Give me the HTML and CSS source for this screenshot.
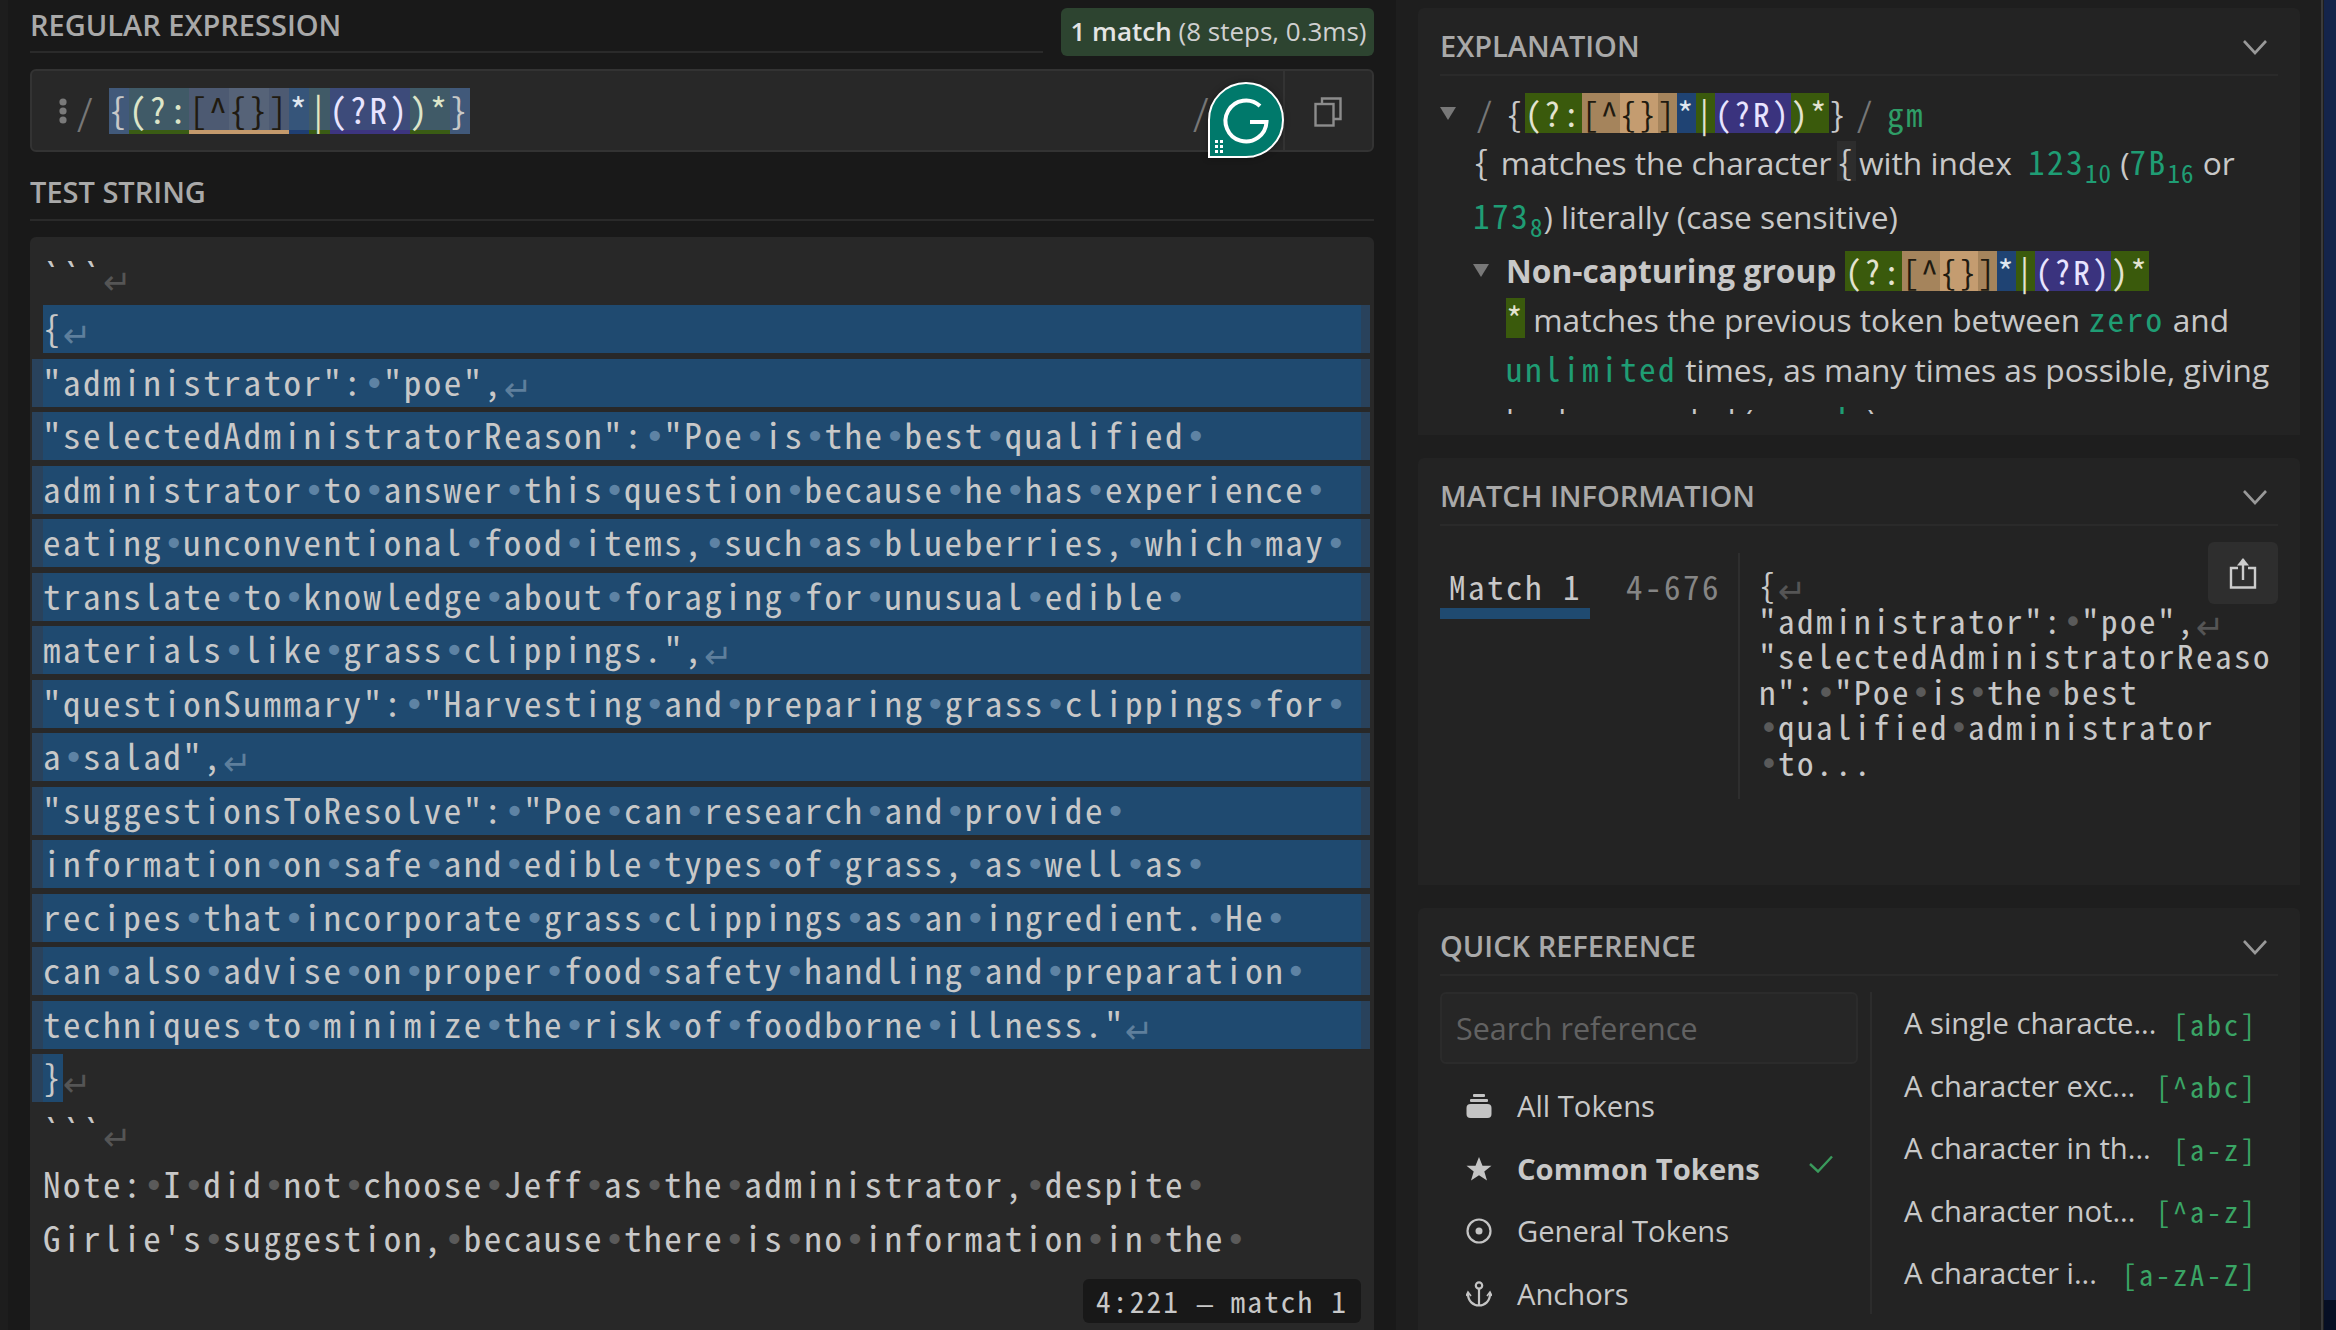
FILE: index.html
```html
<!doctype html>
<html lang="en">
<head>
	<meta charset="UTF-8" />
	<title>regex tester</title>
	<link rel="stylesheet" href="styles.css">
</head>
<body>

<div class="rail"></div>

<div class="main">
	<div class="head-row">
		<div class="head grow">REGULAR EXPRESSION</div>
		<div class="badge"><b>1 match</b> (8 steps, 0.3ms)</div>
	</div>

	<div class="rx-box">
		<svg class="kebab" width="8" height="26" viewBox="0 0 8 26"><circle cx="4" cy="4" r="3.6"/><circle cx="4" cy="13" r="3.6"/><circle cx="4" cy="22" r="3.6"/></svg>
		<span class="rx-slash mono">/</span>
		<div class="rx mono">
			<span class="r-brace">{</span><span class="r-grp">(?:</span><span class="r-set">[^</span><span class="r-set2">{}</span><span class="r-set">]</span><span class="r-star">*</span><span class="r-grp r-bar">|</span><span class="r-rec">(?R)</span><span class="r-grp">)*</span><span class="r-brace">}</span>
		</div>
		<span class="rx-slash rx-end mono">/</span>
		<div class="rx-copy">
			<svg width="28" height="30" viewBox="0 0 28 30" fill="none" stroke="#8c8c8c" stroke-width="2.4"><path d="M8 6V1.5H26.5V22H20"/><rect x="1.5" y="7" width="18" height="21.5"/></svg>
		</div>
		<div class="grammarly">
			<svg width="72" height="72" viewBox="0 0 72 72"><path d="M50 22A20.5 20.5 0 1 0 56.500 38H40" fill="none" stroke="#fff" stroke-width="4"/><g fill="#fff"><rect x="5" y="56" width="3" height="3"/><rect x="10" y="56" width="3" height="3"/><rect x="5" y="61" width="3" height="3"/><rect x="10" y="61" width="3" height="3"/><rect x="5" y="66" width="3" height="3"/><rect x="10" y="66" width="3" height="3"/></g></svg>
		</div>
	</div>

	<div class="head test-head">TEST STRING</div>

	<div class="editor mono">
		<div class="ln">```<u>↵</u></div>
		<div class="ln hl first">{<u>↵</u></div>
		<div class="ln hl">"administrator":<i>•</i>"poe",<u>↵</u></div>
		<div class="ln hl">"selectedAdministratorReason":<i>•</i>"Poe<i>•</i>is<i>•</i>the<i>•</i>best<i>•</i>qualified<i>•</i></div>
		<div class="ln hl">administrator<i>•</i>to<i>•</i>answer<i>•</i>this<i>•</i>question<i>•</i>because<i>•</i>he<i>•</i>has<i>•</i>experience<i>•</i></div>
		<div class="ln hl">eating<i>•</i>unconventional<i>•</i>food<i>•</i>items,<i>•</i>such<i>•</i>as<i>•</i>blueberries,<i>•</i>which<i>•</i>may<i>•</i></div>
		<div class="ln hl">translate<i>•</i>to<i>•</i>knowledge<i>•</i>about<i>•</i>foraging<i>•</i>for<i>•</i>unusual<i>•</i>edible<i>•</i></div>
		<div class="ln hl">materials<i>•</i>like<i>•</i>grass<i>•</i>clippings.",<u>↵</u></div>
		<div class="ln hl">"questionSummary":<i>•</i>"Harvesting<i>•</i>and<i>•</i>preparing<i>•</i>grass<i>•</i>clippings<i>•</i>for<i>•</i></div>
		<div class="ln hl">a<i>•</i>salad",<u>↵</u></div>
		<div class="ln hl">"suggestionsToResolve":<i>•</i>"Poe<i>•</i>can<i>•</i>research<i>•</i>and<i>•</i>provide<i>•</i></div>
		<div class="ln hl">information<i>•</i>on<i>•</i>safe<i>•</i>and<i>•</i>edible<i>•</i>types<i>•</i>of<i>•</i>grass,<i>•</i>as<i>•</i>well<i>•</i>as<i>•</i></div>
		<div class="ln hl">recipes<i>•</i>that<i>•</i>incorporate<i>•</i>grass<i>•</i>clippings<i>•</i>as<i>•</i>an<i>•</i>ingredient.<i>•</i>He<i>•</i></div>
		<div class="ln hl">can<i>•</i>also<i>•</i>advise<i>•</i>on<i>•</i>proper<i>•</i>food<i>•</i>safety<i>•</i>handling<i>•</i>and<i>•</i>preparation<i>•</i></div>
		<div class="ln hl">techniques<i>•</i>to<i>•</i>minimize<i>•</i>the<i>•</i>risk<i>•</i>of<i>•</i>foodborne<i>•</i>illness."<u>↵</u></div>
		<div class="ln last"><span class="hl-end">}</span><u>↵</u></div>
		<div class="ln">```<u>↵</u></div>
		<div class="ln">Note:<i>•</i>I<i>•</i>did<i>•</i>not<i>•</i>choose<i>•</i>Jeff<i>•</i>as<i>•</i>the<i>•</i>administrator,<i>•</i>despite<i>•</i></div>
		<div class="ln">Girlie's<i>•</i>suggestion,<i>•</i>because<i>•</i>there<i>•</i>is<i>•</i>no<i>•</i>information<i>•</i>in<i>•</i>the<i>•</i></div>
		<div class="pos">4:221 <span class="dash">—</span> match 1</div>
	</div>
</div>

<div class="side">
	<div class="panel">
		<div class="head panel-head">EXPLANATION
			<svg class="chev" width="26" height="16" viewBox="0 0 26 16"><path d="M2 2L13 14L24 2" fill="none" stroke="#999" stroke-width="2.6"/></svg>
		</div>
		<div class="ex-body">
			<div class="ex-top">
				<span class="tri"></span>
				<span class="ex-slash mono">/</span>
				<span class="toks mono">{<span class="t-grp">(?:</span><span class="t-set">[^</span><span class="t-set2">{}</span><span class="t-set">]</span><span class="t-star">*</span><span class="t-grp">|</span><span class="t-rec">(?R)</span><span class="t-grp">)*</span>}</span>
				<span class="ex-slash ex-slash2 mono">/</span>
				<span class="flags mono">gm</span>
			</div>
			<div class="ex-text">
				<span class="mono pl">{</span> matches the character <span class="mono chip">{</span> with index <span class="num num-gap mono">123<sub>10</sub></span> (<span class="num mono">7B<sub>16</sub></span> or<br>
				<span class="num mono">173<sub>8</sub></span>) literally (case sensitive)
			</div>
			<div class="ex-group">
				<span class="tri"></span>
				<b>Non-capturing group</b>
				<span class="toks mono"><span class="t-grp">(?:</span><span class="t-set">[^</span><span class="t-set2">{}</span><span class="t-set">]</span><span class="t-star">*</span><span class="t-grp">|</span><span class="t-rec">(?R)</span><span class="t-grp">)*</span></span>
			</div>
			<div class="ex-text ex-sub">
				<span class="mono t-grp">*</span> matches the previous token between <span class="num mono">zero</span> and<br>
				<span class="num mono">unlimited</span> times, as many times as possible, giving<br>
				back as needed (<span class="num mono">greedy</span>)
			</div>
		</div>
	</div>

	<div class="panel">
		<div class="head panel-head">MATCH INFORMATION
			<svg class="chev" width="26" height="16" viewBox="0 0 26 16"><path d="M2 2L13 14L24 2" fill="none" stroke="#999" stroke-width="2.6"/></svg>
		</div>
		<div class="mi-body mono">
			<div class="mi-name"><span class="mi-tab">Match 1</span></div>
			<div class="mi-range">4-676</div>
			<div class="mi-text">
				<div>{<u>↵</u></div>
				<div>"administrator":<i>•</i>"poe",<u>↵</u></div>
				<div>"selectedAdministratorReaso</div>
				<div>n":<i>•</i>"Poe<i>•</i>is<i>•</i>the<i>•</i>best</div>
				<div><i>•</i>qualified<i>•</i>administrator</div>
				<div><i>•</i>to...</div>
			</div>
			<div class="mi-share">
				<svg width="28" height="32" viewBox="0 0 28 32" fill="none" stroke="#ccc" stroke-width="2.4"><path d="M9 11H2V30.500H26V11H19"/><path d="M14 23V2.500"/><path d="M14 1L8 8.500H20Z" fill="#ccc" stroke="none"/></svg>
			</div>
		</div>
	</div>

	<div class="panel panel-last">
		<div class="head panel-head">QUICK REFERENCE
			<svg class="chev" width="26" height="16" viewBox="0 0 26 16"><path d="M2 2L13 14L24 2" fill="none" stroke="#999" stroke-width="2.6"/></svg>
		</div>
		<div class="qr-body">
			<div class="qr-left">
				<div class="search">Search reference</div>
				<div class="menu">
					<svg width="26" height="24" viewBox="0 0 26 24" fill="#c4c4c4"><rect x="7" y="0" width="12" height="3" rx="1"/><rect x="4" y="5" width="18" height="3" rx="1"/><rect x="0.500" y="10" width="25" height="14" rx="4"/></svg>
					All Tokens
				</div>
				<div class="menu menu-on">
					<svg width="26" height="24" viewBox="0 0 26 24" fill="#c4c4c4"><path d="M13 0L16.500 8.800H25.500L18.300 14.500L21 23.500L13 18.200L5 23.500L7.700 14.500L.5 8.800H9.500Z"/></svg>
					Common Tokens
					<svg class="check" width="28" height="18" viewBox="0 0 28 18"><path d="M3 9L11 16.500L25 1.500" fill="none" stroke="#3a9a5c" stroke-width="2.400"/></svg>
				</div>
				<div class="menu">
					<svg width="26" height="26" viewBox="0 0 26 26" fill="none" stroke="#c4c4c4" stroke-width="2.200"><circle cx="13" cy="13" r="11.500"/><circle cx="13" cy="13" r="3.500" fill="#c4c4c4" stroke="none"/></svg>
					General Tokens
				</div>
				<div class="menu">
					<svg width="26" height="26" viewBox="0 0 26 26" fill="none" stroke="#c4c4c4" stroke-width="2.200"><circle cx="13" cy="4.500" r="3.200"/><path d="M13 8V24.500"/><path d="M2 13C2 20 7 24.500 13 24.500S24 20 24 13"/><path d="M0 15L2 11L5 15M21 15L24 11L26 15" stroke-width="1.600"/></svg>
					Anchors
				</div>
			</div>
			<div class="qr-right">
				<div class="qr-row"><span>A single characte...</span><span class="qr-tok mono">[abc]</span></div>
				<div class="qr-row"><span>A character exc...</span><span class="qr-tok mono">[^abc]</span></div>
				<div class="qr-row"><span>A character in th...</span><span class="qr-tok mono">[a-z]</span></div>
				<div class="qr-row"><span>A character not...</span><span class="qr-tok mono">[^a-z]</span></div>
				<div class="qr-row"><span>A character i...</span><span class="qr-tok mono">[a-zA-Z]</span></div>
			</div>
		</div>
	</div>
</div>

<div class="strip"><div class="strip-top"></div></div>

</body>
</html>
```

FILE: styles.css
```css
html, body{
	margin: 0;
	padding: 0;
	height: 1330px;
	overflow: hidden;
}
body{
	display: flex;
	background: #1e1e1e;
	color: #c8c8c8;
	font-family: "Open Sans", "Noto Sans", sans-serif;
	font-size: 29.200px;
}
.mono{
	font-family: "Noto Sans Mono CJK SC", "Source Code Pro", "DejaVu Sans Mono", monospace;
}
.rail{
	width: 8px;
	flex: none;
	background: #1d1d1d;
}
.main{
	width: 1344px;
	flex: none;
	padding: 0 22px;
	background: #191919;
	display: flex;
	flex-direction: column;
}

/* section headings */
.head{
	font-size: 29px;
	font-weight: 600;
	color: #a9a9a9;
	border-bottom: 2px solid #2a2a2a;
	box-sizing: border-box;
}
.head-row{
	display: flex;
	gap: 18px;
	height: 69px;
	flex: none;
}
.head.grow{
	flex: 1;
	height: 53px;
	line-height: 50px;
}
.badge{
	width: 313px;
	height: 48px;
	margin-top: 8px;
	box-sizing: border-box;
	padding-left: 2px;
	background: #2d4430;
	border-radius: 6px;
	line-height: 47px;
	text-align: center;
	font-size: 26px;
	color: #d0d0d0;
	white-space: nowrap;
}
.badge b{
	font-weight: 600;
	color: #e4e4e4;
}

/* regex box */
.rx-box{
	position: relative;
	height: 83px;
	flex: none;
	box-sizing: border-box;
	background: #282828;
	border: 2px solid #333;
	border-radius: 6px;
	display: flex;
	align-items: center;
}
.kebab{
	margin-left: 27px;
	fill: #7a7a7a;
	flex: none;
}
.rx-slash{
	color: #777;
	font-size: 35px;
	letter-spacing: 2.540px;
	width: 20px;
	margin-left: 9px;
	flex: none;
}
.rx{
	display: flex;
	margin-left: 13px;
	font-size: 35px;
	letter-spacing: 2.540px;
	height: 46px;
	line-height: 42px;
}
.rx span{
	height: 42px;
	border-bottom: 4px solid transparent;
}
.r-brace{ background: #41597a; color: #c8c8c8; }
.rx .r-grp{ background: #405a67; color: #dde5c8; border-bottom-color: #3a5c14; }
.rx .r-set{ background: #4d5a72; color: #201a10; border-bottom-color: #c49a6c; }
.rx .r-set2{ background: #566378; color: #201a10; border-bottom-color: #c49a6c; }
.rx .r-star{ background: #36557a; color: #e0e8f0; border-bottom-color: #1f3f73; }
.rx .r-rec{ background: #3d4b7a; color: #e8e4ff; border-bottom-color: #3d3580; }
.rx .r-bar{ color: #e6e8c0; }
.rx-end{
	margin-left: auto;
	margin-right: 71px;
}
.rx-copy{
	width: 89px;
	align-self: stretch;
	border-left: 2px solid #333;
	display: flex;
	align-items: center;
	justify-content: center;
	flex: none;
	padding: 2px 2px 0 0;
	box-sizing: border-box;
}
.grammarly{
	position: absolute;
	left: 1176px;
	top: 11px;
	width: 72px;
	height: 72px;
	border: 2px solid #fff;
	border-radius: 50% 50% 50% 0;
	background: #00796b;
	box-shadow: 0 0 6px rgba(0, 0, 0, 0.35);
}
.grammarly svg{
	display: block;
}

.test-head{
	height: 69px;
	line-height: 63px;
	flex: none;
	padding-top: 8px;
	margin-bottom: 16px;
}

/* test string */
.editor{
	position: relative;
	flex: 1;
	background: #282828;
	border-radius: 6px 6px 0 0;
	padding-top: 14.500px;
	font-size: 35px;
	letter-spacing: 2.540px;
	color: #c8c8c8;
	overflow: hidden;
}
.ln{
	height: 48px;
	line-height: 44px;
	margin: 0 4px 5.500px 2px;
	border-left: 11px solid transparent;
	border-right: 9px solid transparent;
	white-space: pre;
}
.ln.hl{
	background: #1f4a70;
	background-clip: padding-box;
	border-left-color: #29425c;
	border-right-color: #29425c;
}
.ln.first{
	border-left-color: transparent;
}
.hl-end{
	display: inline-block;
	background: #1f4a70;
	height: 48px;
	box-shadow: -11px 0 0 #29425c;
}
i{
	display: inline-block;
	width: 20px;
	text-align: center;
	font-style: normal;
	font-family: "DejaVu Sans Mono", monospace;
	letter-spacing: 0;
	color: #5a5a5a;
}
u{
	text-decoration: none;
	display: inline-block;
	width: 20px;
	letter-spacing: 0;
	color: #555;
	font-family: "DejaVu Sans", sans-serif;
	font-size: 34px;
	line-height: 20px;
	position: relative;
	top: 5px;
}
.hl i{
	color: #5e83a4;
}
.hl u{
	color: #5e7f9c;
}
.pos{
	position: absolute;
	right: 13px;
	bottom: 7px;
	height: 44px;
	line-height: 43px;
	padding: 0 13px;
	background: #181818;
	border-radius: 6px;
	font-size: 29.400px;
	letter-spacing: 2.100px;
	color: #c8c8c8;
}
.dash{
	display: inline-block;
	width: 16.800px;
	font-family: "DejaVu Sans Mono", monospace;
	font-size: 27px;
	letter-spacing: 0;
}

/* right column */
.side{
	width: 925px;
	flex: none;
	box-sizing: border-box;
	padding: 8px 21px 0 22px;
	display: flex;
	flex-direction: column;
	gap: 23px;
}
.panel{
	height: 427px;
	flex: none;
	box-sizing: border-box;
	background: #232323;
	border-radius: 6px 6px 0 0;
	padding: 0 22px;
}
.panel-last{
	height: auto;
	flex: 1;
	overflow: hidden;
}
.panel-head{
	height: 68px;
	line-height: 68px;
	padding-top: 4px;
	position: relative;
}
.chev{
	position: absolute;
	right: 10px;
	top: 31px;
}

/* explanation */
.ex-body{
	height: 338px;
	overflow: hidden;
	padding-top: 14.500px;
	box-sizing: border-box;
	font-size: 31.700px;
	line-height: 54px;
}
.ex-top{
	display: flex;
	align-items: center;
	height: 45px;
	padding-bottom: 3px;
	margin-bottom: -3px;
}
.tri{
	display: inline-block;
	width: 0;
	height: 0;
	border-left: 8px solid transparent;
	border-right: 8px solid transparent;
	border-top: 13px solid #787878;
	flex: none;
}
.ex-slash{
	color: #777;
	font-size: 33.200px;
	letter-spacing: 2.400px;
	margin-left: 20px;
	width: 20px;
}
.ex-slash2{
	margin-left: 8px;
}
.toks{
	font-size: 33.200px;
	letter-spacing: 2.400px;
	display: inline-flex;
	line-height: 40px;
	margin-left: 10px;
}
.toks span{
	display: block;
	height: 40px;
}
.t-grp{ background: #3a5a0c; color: #e3e3d0; }
.t-set{ background: #a5845c; color: #201a10; }
.t-set2{ background: #c49c70; color: #201a10; }
.t-star{ background: #1f4373; color: #dfe6f0; }
.t-rec{ background: #3a337e; color: #e8e4ff; }
.flags{
	font-size: 33.200px;
	letter-spacing: 2.400px;
	color: #2f9e67;
	margin-left: 11px;
}
.ex-text{
	margin-left: 33px;
	white-space: nowrap;
}
.pl{
	font-size: 33.200px;
	line-height: 0;
	margin-right: 3px;
}
.chip{
	display: inline-block;
	height: 40px;
	line-height: 40px;
	margin: 0 -5px 0 -3px;
	background: #2d2d2d;
	font-size: 33.200px;
	letter-spacing: 2.400px;
}
.num{
	color: #1f9d74;
	font-size: 33.200px;
	letter-spacing: 2.400px;
	line-height: 0;
}
.num-gap{
	margin-left: 8px;
}
sub{
	font-size: 25px;
	letter-spacing: 1px;
	line-height: 0;
}
.ex-group{
	margin: 0 0 -3px 33px;
	height: 54px;
	display: flex;
	align-items: center;
}
.ex-group b{
	margin-left: 17px;
	font-weight: 700;
	color: #c8c8c8;
}
.ex-group .toks{
	margin-left: 9px;
}
.ex-sub{
	margin-left: 66px;
	line-height: 50px;
}
.ex-sub .t-grp{
	display: inline-block;
	height: 40px;
	line-height: 40px;
	font-size: 33.200px;
	letter-spacing: 2.400px;
}

/* match information */
.mi-body{
	position: relative;
	display: flex;
	padding-top: 27px;
	font-size: 33px;
	letter-spacing: 2.500px;
}
.mi-name{
	width: 150px;
	flex: none;
}
.mi-tab{
	display: block;
	height: 66px;
	box-sizing: border-box;
	padding: 13px 0 0 9px;
	line-height: 40px;
	border-bottom: 11px solid #1f4a70;
}
.mi-range{
	width: 148px;
	flex: none;
	box-sizing: border-box;
	padding: 13px 0 0 36px;
	line-height: 40px;
	color: #858585;
}
.mi-text{
	height: 246px;
	box-sizing: border-box;
	border-left: 2px solid #2e2e2e;
	padding: 14px 0 0 19px;
	line-height: 35.500px;
}
.mi-text div{
	height: 35.500px;
	white-space: pre;
}
.mi-text u{
	width: 19px;
}
.mi-text i{
	width: 19px;
}
.mi-share{
	position: absolute;
	right: 0;
	top: 16px;
	width: 70px;
	height: 62px;
	background: #2e2e2e;
	border-radius: 6px;
	display: flex;
	align-items: center;
	justify-content: center;
}

/* quick reference */
.qr-body{
	display: flex;
	padding-top: 16px;
}
.qr-left{
	width: 418px;
	flex: none;
}
.search{
	height: 72px;
	box-sizing: border-box;
	line-height: 68px;
	padding-left: 14px;
	background: #262626;
	border: 2px solid #2b2b2b;
	border-radius: 6px;
	color: #626262;
	font-size: 30.500px;
}
.menu{
	height: 62.500px;
	display: flex;
	align-items: center;
	gap: 25px;
	padding-left: 26px;
	position: relative;
}
.menu:nth-child(2){
	margin-top: 11px;
}
.menu-on{
	font-weight: 700;
}
.check{
	position: absolute;
	left: 367px;
	top: 17px;
}
.qr-right{
	flex: 1;
	margin-left: 12px;
	border-left: 2px solid #2c2c2c;
	height: 322px;
	padding: 0 20px 0 32px;
}
.qr-row{
	height: 62.500px;
	display: flex;
	justify-content: space-between;
	align-items: center;
	white-space: nowrap;
}
.qr-tok{
	color: #3aa565;
	font-size: 28.200px;
	letter-spacing: 2.900px;
}

/* page scrollbar */
.strip{
	flex: 1;
	box-sizing: border-box;
	border-left: 2px solid #3a3a3a;
	padding-left: 1px;
	background: #070f24;
	background-clip: content-box;
}
.strip-top{
	height: 1300px;
	background: #14244a;
}
```
